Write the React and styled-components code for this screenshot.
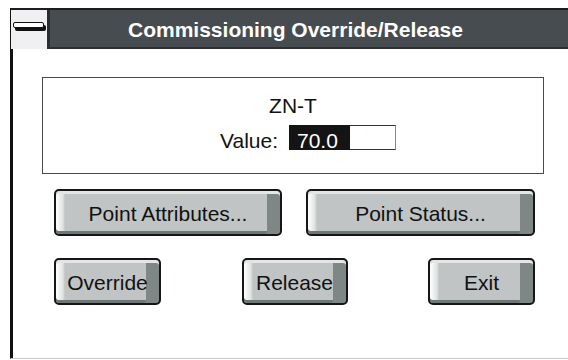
import React from "react";
import styled, { createGlobalStyle } from "styled-components";

const Global = createGlobalStyle`
  html, body { margin: 0; padding: 0; background: #ffffff; overflow: hidden; }
  body { width: 568px; height: 360px; font-family: "Liberation Sans", Arial, sans-serif; }
`;

const Window = styled.div`
  margin: 8px 0 0 10px;
  width: 558px;
  height: 351px;
  border-left: 1px solid #111;
  border-bottom: 1px solid #c8c8c8;
  background: #fff;
  display: flex;
  flex-direction: column;
  box-sizing: border-box;
`;

const TitleBar = styled.div`
  display: flex;
  height: 41px;
  border-top: 2px solid #1b1d1f;
  box-sizing: border-box;
`;

const ControlBox = styled.div`
  width: 39px;
  background: #f0f0f2;
  border-right: 3px solid #2a2d30;
  display: flex;
  align-items: flex-start;
  padding: 12px 0 0 2px;
  box-sizing: border-box;
`;

const Dash = styled.div`
  width: 31px;
  height: 6px;
  box-sizing: border-box;
  background: #fff;
  border: 1px solid #111;
  border-radius: 2px;
  box-shadow: 2px 3px 0 #111;
`;

const Caption = styled.div`
  flex: 1;
  background: #474c50;
  border-bottom: 2px solid #2c3033;
  color: #fff;
  font-weight: bold;
  font-size: 21px;
  line-height: 24px;
  display: flex;
  justify-content: center;
  padding: 8px 27px 0 0;
  box-sizing: border-box;
  white-space: nowrap;
`;

const Body = styled.div`
  flex: 1;
  border-left: 2px solid #111;
  padding: 28px 0 0 29px;
  display: flex;
  flex-direction: column;
  color: #111;
  font-size: 21px;
  line-height: 24px;
`;

const GroupBox = styled.div`
  width: 502px;
  height: 97px;
  box-sizing: border-box;
  border: 1px solid #4a4a4a;
  padding-top: 16px;
  display: flex;
  flex-direction: column;
`;

const PointName = styled.div`
  text-align: center;
`;

const ValueRow = styled.div`
  display: flex;
  align-items: baseline;
  margin-top: 7px;
  padding-left: 177px;
  gap: 11px;
`;

const Field = styled.div`
  display: flex;
  width: 107px;
  height: 25px;
  box-sizing: border-box;
  border: 1px solid #333;
  border-right-color: #888;
  background: #fff;
`;

const Selected = styled.span`
  background: #141414;
  color: #fff;
  width: 61px;
  margin: -1px 0 -1px -1px;
  padding: 7px 0 0 8px;
  box-sizing: border-box;
  line-height: 18px;
`;

const Row = styled.div`
  display: flex;
  justify-content: space-between;
  width: 481px;
  margin: ${(p) => p.$top}px 0 0 12px;
`;

const Button = styled.button`
  width: ${(p) => p.$w}px;
  height: 47px;
  box-sizing: border-box;
  border: 2px solid #161616;
  border-radius: 5px;
  background:
    linear-gradient(90deg, #ffffff 0, #f2f3f3 3px, #dfe1e1 7px, transparent 9px),
    #c0c4c4;
  font-family: "Liberation Sans", Arial, sans-serif;
  font-size: 21px;
  color: #111;
  padding: 3px 0 0 0;
  box-shadow:
    inset 0 3px 0 #e4e6e6,
    inset -13px 0 0 #7e8686,
    inset 0 -3px 0 #6e7676;
  display: flex;
  align-items: center;
  justify-content: center;
  line-height: 24px;
  white-space: nowrap;
`;

export default function App() {
  return (
    <>
      <Global />
      <Window>
        <TitleBar>
          <ControlBox>
            <Dash />
          </ControlBox>
          <Caption>Commissioning Override/Release</Caption>
        </TitleBar>
        <Body>
          <GroupBox>
            <PointName>ZN-T</PointName>
            <ValueRow>
              <span>Value:</span>
              <Field>
                <Selected>70.0</Selected>
              </Field>
            </ValueRow>
          </GroupBox>
          <Row $top={15}>
            <Button $w={228}>Point Attributes...</Button>
            <Button $w={229}>Point Status...</Button>
          </Row>
          <Row $top={22}>
            <Button $w={107}>Override</Button>
            <Button $w={106}>Release</Button>
            <Button $w={107}>Exit</Button>
          </Row>
        </Body>
      </Window>
    </>
  );
}
